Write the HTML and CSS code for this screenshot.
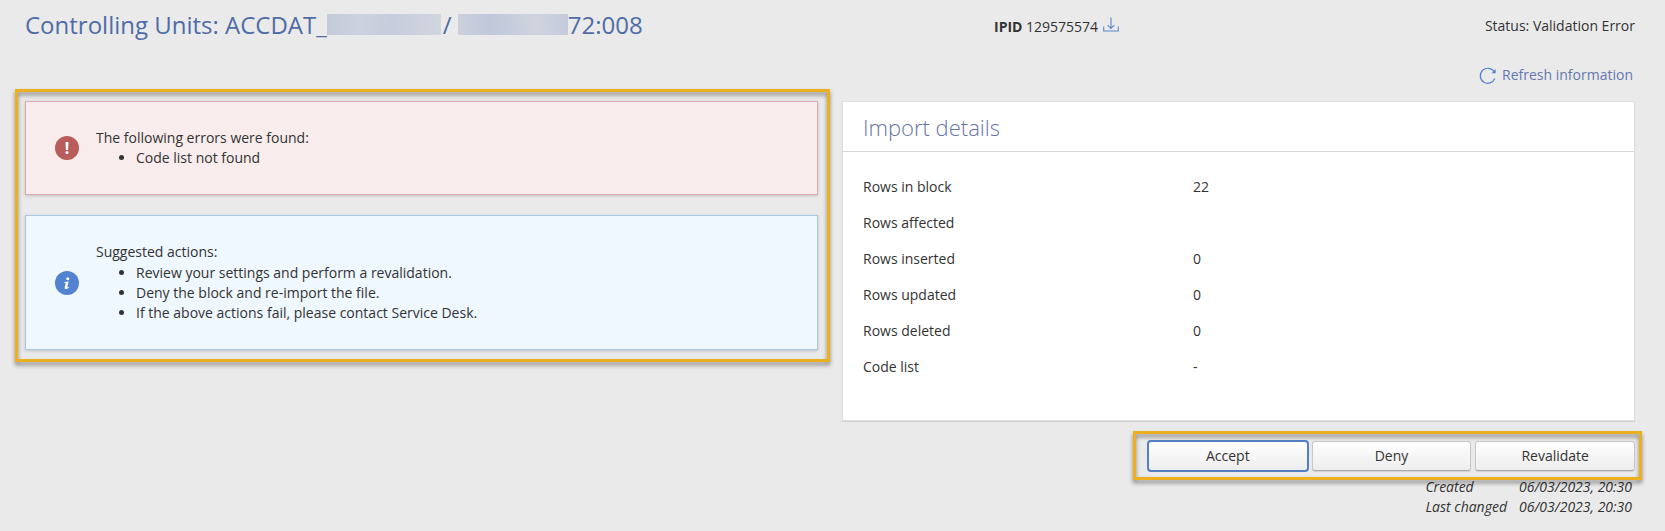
FILE: index.html
```html
<!DOCTYPE html>
<html lang="en">
<head>
<meta charset="utf-8">
<title>Controlling Units</title>
<link rel="stylesheet" href="styles.css">
</head>
<body>
<header class="page-header">
  <h1 class="title">Controlling Units: ACCDAT_<span class="redacted redacted-name"></span><span class="slash">/</span><span class="redacted redacted-id"></span>72:008</h1>
  <div class="ipid"><span><b>IPID</b> 129575574</span>
    <svg class="download" width="16" height="16" viewBox="0 0 16 16"><path d="M8 .5v11M4.700 8.200 8 11.500l3.300-3.300M.7 9.500v4.500h14.600V9.500"/></svg>
  </div>
  <div class="status">Status: Validation Error</div>
</header>
<div class="toolbar">
  <a class="refresh"><svg width="18" height="18" viewBox="0 0 18 18"><path d="M15.800 11.500A7.500 7.500 0 1 1 15.300 5"/><path class="tip" d="M16.700 2v4.200h-4.200z"/></svg><span>Refresh information</span></a>
</div>
<main class="columns">
  <section class="messages">
    <div class="alert alert-error">
      <svg class="badge" width="24" height="24" viewBox="0 0 24 24"><circle cx="12" cy="12" r="12"/><path d="M10.500 6h3l-.4 8h-2.200z"/><circle class="dot" cx="12" cy="16.600" r="1.500"/></svg>
      <div class="alert-body"><p>The following errors were found:</p>
        <ul><li>Code list not found</li></ul></div>
    </div>
    <div class="alert alert-info">
      <svg class="badge" width="24" height="24" viewBox="0 0 24 24"><circle cx="12" cy="12" r="12"/><circle class="dot" cx="12.800" cy="7.700" r="1.500"/><path d="M9.500 11.100 13.600 10.600 12.300 16.200Q12.200 16.900 13.900 15.700L14.200 16.200Q12.400 18.300 10.500 18.100 9.300 17.900 9.700 16.300L10.700 12.200Q10.600 11.700 9.400 11.700Z"/></svg>
      <div class="alert-body"><p>Suggested actions:</p>
        <ul><li>Review your settings and perform a revalidation.</li><li>Deny the block and re-import the file.</li><li>If the above actions fail, please contact Service Desk.</li></ul></div>
    </div>
    <div class="highlight highlight-messages"></div>
  </section>
  <section class="side">
    <div class="panel">
      <h2 class="panel-title">Import details</h2>
      <dl class="details">
        <dt>Rows in block</dt><dd>22</dd>
        <dt>Rows affected</dt><dd></dd>
        <dt>Rows inserted</dt><dd>0</dd>
        <dt>Rows updated</dt><dd>0</dd>
        <dt>Rows deleted</dt><dd>0</dd>
        <dt>Code list</dt><dd>-</dd>
      </dl>
    </div>
    <div class="actions">
      <button class="btn btn-focus">Accept</button>
      <button class="btn">Deny</button>
      <button class="btn">Revalidate</button>
      <div class="highlight highlight-actions"></div>
    </div>
    <div class="dates">
      <span>Created</span><span>06/03/2023, 20:30</span>
      <span>Last changed</span><span>06/03/2023, 20:30</span>
    </div>
  </section>
</main>
</body>
</html>
```
FILE: styles.css
```css
* { box-sizing: border-box; }
body {
  margin: 0;
  height: 531px;
  overflow: hidden;
  padding: 0 30px 0 25px;
  background: #eaeaea;
  color: #333;
  font: 14px/20px "Open Sans", sans-serif;
}
h1, h2, p, ul, dl, dd { margin: 0; }
.page-header { display: grid; grid-template-columns: 969px 1fr auto; height: 52px; }
.title { display: flex; padding-top: 8px; font-size: 24px; line-height: 33px; font-weight: 400; color: #4f6ca8; white-space: nowrap; }
.redacted { height: 21px; margin-top: 6px; }
.redacted-name { width: 114px; background: linear-gradient(100deg, #c3c9d8, #cdd2df 30%, #c6ccdc 55%, #d2d6df); }
.redacted-id { width: 110px; background: linear-gradient(80deg, #cdd1dc, #bfc7da 30%, #d0d4de 70%, #c3cadb); }
.slash { width: 17px; padding-left: 2px; }
.ipid { display: flex; gap: 5px; padding-top: 17px; white-space: nowrap; }
.download { fill: none; stroke: #5b86cc; stroke-width: 1.1; }
.status { padding-top: 16px; }
.toolbar { display: flex; justify-content: flex-end; height: 49px; padding: 13px 2px 0 0; }
.refresh { display: flex; gap: 5px; height: 20px; color: #6478ae; }
.refresh svg { margin-top: 2px; fill: none; stroke: #5383cf; stroke-width: 1.2; }
.refresh .tip { fill: #5383cf; stroke: none; }
.columns { display: grid; grid-template-columns: 793px 793px; gap: 24px; align-items: start; }
.messages { position: relative; display: flex; flex-direction: column; gap: 20px; }
.alert { display: flex; align-items: center; padding-left: 29px; border: 1px solid; box-shadow: 0 1px 3px rgba(0,0,0,.18); }
.alert-error { height: 94px; background: #f8ecec; border-color: #dcabad; }
.alert-info { height: 135px; background: #eff7ff; border-color: #a9c8e3; }
.badge { margin-right: 17px; fill: #fff; }
.alert-error .badge > circle:first-child { fill: #b95c5c; }
.alert-info .badge > circle:first-child { fill: #5383d0; }
.alert ul { padding-left: 40px; }
.alert-info ul { padding-top: 1px; }
.highlight { position: absolute; border: 3px solid #ebaf20; filter: drop-shadow(0 3px 2px rgba(0,0,0,.45)); pointer-events: none; }
.highlight-messages { inset: -12px -12px -12px -10px; }
.panel { height: 320px; background: #fff; border: 1px solid #dedede; box-shadow: 0 1px 1px rgba(0,0,0,.1); }
.panel-title { height: 50px; padding: 8px 20px 0; border-bottom: 1px solid #d8d8d8; font-size: 22px; line-height: 34px; font-weight: 300; color: #6675a5; }
.details { display: grid; grid-template-columns: 330px 1fr; grid-auto-rows: 36px; padding: 25px 20px 0; }
.actions { position: relative; display: flex; gap: 4px; margin: 20px 0 0 306px; height: 30px; }
.btn { flex: 1; padding: 0; border: 1px solid #c8c8c8; border-bottom-color: #aaa; border-radius: 3px; background: linear-gradient(#fff, #ededed); box-shadow: 0 1px 1px rgba(0,0,0,.1); color: #333; font: 14px/20px "Open Sans", sans-serif; }
.btn-focus { outline: 2px solid #5280c5; outline-offset: -1px; }
.highlight-actions { inset: -10px -7px -9px -15px; }
.dates { display: grid; grid-template-columns: auto auto; justify-content: end; column-gap: 12px; margin-top: 6px; padding-right: 3px; font-style: italic; }
```
